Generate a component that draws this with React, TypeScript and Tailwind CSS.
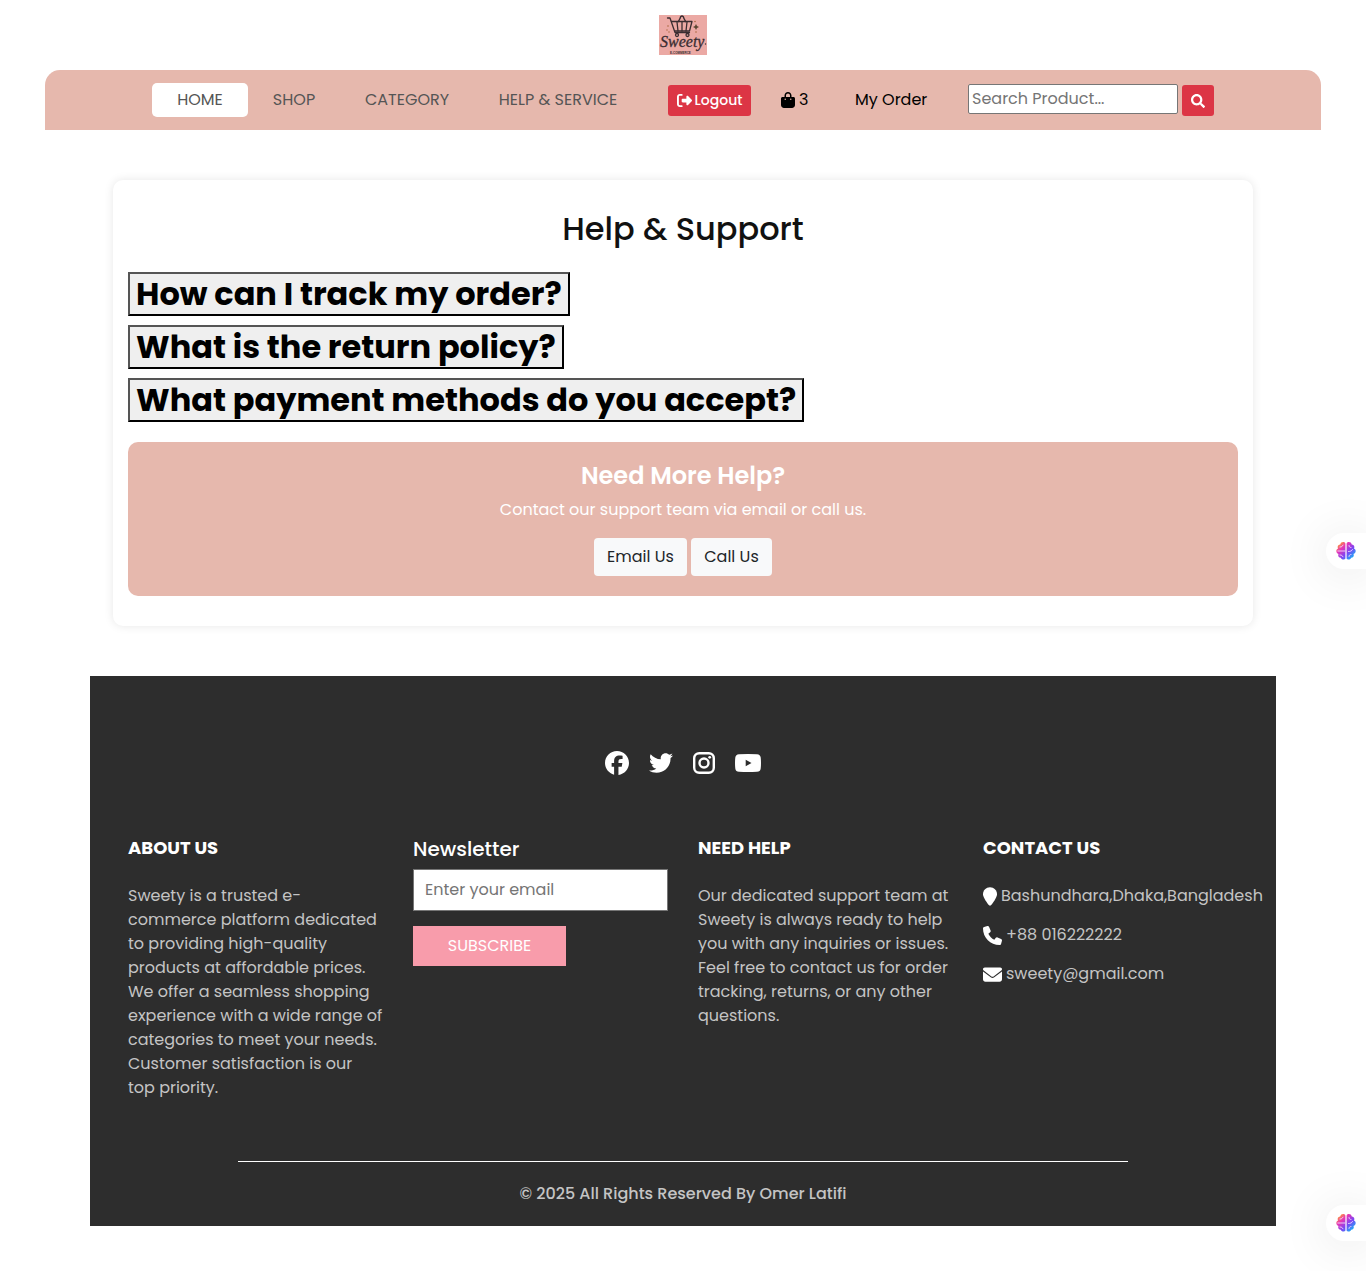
import React from 'react';
import { FaBagShopping, FaEnvelope, FaFacebook, FaLocationPin, FaPhone, FaRightFromBracket, FaTwitter } from 'react-icons/fa6';
import { FaSearch } from 'react-icons/fa';

function Logo() {
  return (
    <svg viewBox="0 0 48 40" className="h-10 w-12" role="img" aria-label="Sweety E-Commerce">
      <rect width="48" height="40" fill="#eba9a4" />
      <g fill="none" stroke="#3a2d31" strokeWidth="1.3" strokeLinecap="round" strokeLinejoin="round">
        <path d="M8.500 3h2.500l5 14.500h14.500" />
        <path d="M12.500 6.500h20.500l-2.500 9.500h-14.500" />
        <path d="M18 7l1 9M23 7v9M28 7l-1 9" />
        <path d="M19.500 6.500c.5-2 1.500-2 2-4.500q1.500-2 3 0c.5 2.500 1.500 2.500 2 4.500" />
        <circle cx="18" cy="20" r="1.500" />
        <circle cx="28.500" cy="20" r="1.500" />
      </g>
      <path d="M37 9l1 2 2 1-2 1-1 2-1-2-2-1 2-1z" fill="#5a4632" />
      <g fill="#a8683f">
        <circle cx="9" cy="11" r=".8" />
        <circle cx="8" cy="15" r=".7" />
        <circle cx="10" cy="17" r=".7" />
        <circle cx="36" cy="6.500" r=".8" />
        <circle cx="37" cy="17" r=".8" />
      </g>
      <text x="1" y="32" fontFamily="Liberation Serif, serif" fontStyle="italic" fontSize="16" fill="#3a2d31" stroke="#3a2d31" strokeWidth=".3">Sweety</text>
      <text x="11" y="39" fontFamily="Liberation Sans, sans-serif" fontWeight="700" fontSize="3" fill="#3a2d31">E-COMMERCE</text>
      <circle cx="46.500" cy="29" r=".7" fill="#3a2d31" />
    </svg>
  );
}

function InstagramIcon() {
  return (
    <svg viewBox="0 0 22 22" className="size-[22px]" fill="none" stroke="currentColor" aria-hidden="true">
      <rect x="1.200" y="1.200" width="19.600" height="19.600" rx="5" strokeWidth="2.400" />
      <circle cx="11" cy="11" r="4.500" strokeWidth="2.400" />
      <circle cx="16.700" cy="5.300" r="1.400" fill="currentColor" stroke="none" />
    </svg>
  );
}

function YoutubeIcon() {
  return (
    <svg viewBox="0 0 26 18" className="h-[18px] w-[26px]" fill="currentColor" fillRule="evenodd" aria-hidden="true">
      <path d="M4 .2Q13-.2 22 .2q3.300.3 3.700 3.400.6 5.400 0 10.800-.4 3.100-3.700 3.400-9 .4-18 0Q.7 17.500.3 14.400q-.6-5.400 0-10.800Q.7.500 4 .2zM10.700 5.800v6.400l5.800-3.200z" />
    </svg>
  );
}

function Brain({ id }: { id: string }) {
  return (
    <svg viewBox="0 0 20 20" className="size-5" aria-hidden="true">
      <defs>
        <linearGradient id={id} x1="0" y1="0" x2="1" y2="1">
          <stop offset=".1" stopColor="#ff9a2e" />
          <stop offset=".32" stopColor="#e935b5" />
          <stop offset=".6" stopColor="#7a45f5" />
          <stop offset=".9" stopColor="#12b9f5" />
        </linearGradient>
      </defs>
      <path
        fill={`url(#${id})`}
        d="M9.400 2.500v15c-.8 1.500-4 1.500-4.600-.7-2 .1-3.200-2-2.300-3.800C-.3 12-.3 8.500 2 7.500 1 5.300 2.300 3.500 4.200 3.500 4.800.5 8.500.3 9.400 2.500zM10.600 2.500c.9-2.200 4.600-2 5.200 1 1.900 0 3.200 1.800 2.200 4 2.300 1 2.300 4.500-.5 5.500.9 1.800-.3 3.900-2.300 3.800-.6 2.200-3.800 2.200-4.600.7z"
      />
      <path
        d="M4 6c1.500 0 2.500-.6 3-1.800M1.800 10h7M4 14c1.500 0 2.500.6 3 1.800M13 4.500c0 1.500 1 2 2 2M12.500 10.500c2 0 3.500-.6 4-2M13 15.500c0-1.500 1-2 2-2"
        fill="none"
        stroke="#f0d8ff"
        strokeWidth=".9"
        strokeLinecap="round"
      />
    </svg>
  );
}

const questions = [
  'How can I track my order?',
  'What is the return policy?',
  'What payment methods do you accept?',
];

export default function App() {
  return (
    <div className="relative overflow-x-hidden bg-white pb-[45px] font-[Poppins,Inter,sans-serif] text-base leading-6 text-[#212529]">
      <header className="px-[45px] pt-[15px]">
        <a href="#home" className="mx-auto mb-[15px] block w-12"><Logo /></a>
        <nav className="flex h-[60px] items-center justify-center rounded-t-[15px] bg-[#e6b8ad] text-[#555]">
          <a href="#home" className="w-24 rounded-[5px] bg-white py-[5px] text-center">HOME</a>
          <a href="#shop" className="w-[92px] text-center">SHOP</a>
          <a href="#category" className="w-[134px] text-center">CATEGORY</a>
          <a href="#help" className="w-[168px] text-center">HELP &amp; SERVICE</a>
          <button className="ml-[26px] flex h-[31px] w-[83px] items-center justify-center gap-[3px] rounded-[3px] bg-[#dc3545] text-sm font-medium text-white">
            <FaRightFromBracket className="size-[15px]" />Logout
          </button>
          <a href="#cart" className="ml-[30px] flex w-7 items-center gap-1 text-black">
            <FaBagShopping className="h-4 w-[14px] shrink-0" />3
          </a>
          <a href="#orders" className="ml-[46px] w-[73px] whitespace-nowrap text-black">My Order</a>
          <form className="ml-10 flex h-8 gap-1" onSubmit={(e) => e.preventDefault()}>
            <input aria-label="Search Product" placeholder="Search Product..." className="h-[30px] w-[210px] self-start rounded-[2px] border border-[#767676] bg-white px-[3px] pb-0.5 placeholder:text-[#757575]" />
            <button aria-label="Search" className="flex h-[31px] w-8 items-center justify-center self-end rounded-[3px] bg-[#dc3545] text-white"><FaSearch className="size-[14px]" /></button>
          </form>
        </nav>
      </header>

      <main className="mx-auto mt-[50px] max-w-[1140px] rounded-[10px] px-[15px] py-[30px] shadow-[0_0_10px_rgba(0,0,0,0.1)]">
        <h1 className="mb-6 text-center text-[32px] leading-[38px] font-medium text-[#111]">Help &amp; Support</h1>
        <div className="flex flex-col items-start gap-[9px]">
          {questions.map((q) => (
            <button key={q} className="border-2 border-t-[#555] border-r-black border-b-black border-l-[#555] bg-[#efefef] px-1.5 text-left text-[32px] leading-10 font-bold text-black">{q}</button>
          ))}
        </div>
        <section className="mt-5 flex flex-col items-center rounded-[10px] bg-[#e6b8ad] p-5 text-white">
          <h2 className="mb-2 text-2xl leading-7 font-semibold">Need More Help?</h2>
          <p className="mb-4">Contact our support team via email or call us.</p>
          <div className="flex gap-1 text-[#212529]">
            <a href="mailto:sweety@gmail.com" className="w-[93px] rounded-[4px] bg-[#f8f9fa] py-[7px] text-center">Email Us</a>
            <a href="tel:+88016222222" className="w-[81px] rounded-[4px] bg-[#f8f9fa] py-[7px] text-center">Call Us</a>
          </div>
        </section>
      </main>

      <footer className="mx-[90px] mt-[50px] bg-[#2d2d2d] pt-[75px] pb-5 text-[#c4c4c4]">
        <div className="flex h-6 items-center justify-center gap-5 text-2xl text-white">
          <a href="#facebook" aria-label="Facebook"><FaFacebook /></a>
          <a href="#twitter" aria-label="Twitter"><FaTwitter /></a>
          <a href="#instagram" aria-label="Instagram"><InstagramIcon /></a>
          <a href="#youtube" aria-label="YouTube"><YoutubeIcon /></a>
        </div>
        <div className="mx-auto mt-[61px] grid max-w-[1140px] grid-cols-4">
          <section className="px-[15px]">
            <h3 className="mb-6 text-[18px] leading-6 font-bold text-white">ABOUT US</h3>
            <p>Sweety is a trusted e-commerce platform dedicated to providing high-quality products at affordable prices. We offer a seamless shopping experience with a wide range of categories to meet your needs. Customer satisfaction is our top priority.</p>
          </section>
          <section className="px-[15px]">
            <h3 className="mb-[7px] text-xl leading-[26px] font-medium text-white">Newsletter</h3>
            <form onSubmit={(e) => e.preventDefault()}>
              <input type="email" aria-label="Email" placeholder="Enter your email" className="mb-[15px] block h-[42px] w-full border border-[#767676] bg-white px-[11px] pb-0.5 placeholder:text-[#757575]" />
              <button className="h-10 w-[153px] bg-[#f89cab] text-white">SUBSCRIBE</button>
            </form>
          </section>
          <section className="px-[15px]">
            <h3 className="mb-6 text-[18px] leading-6 font-bold text-white">NEED HELP</h3>
            <p>Our dedicated support team at Sweety is always ready to help you with any inquiries or issues. Feel free to contact us for order tracking, returns, or any other questions.</p>
          </section>
          <section className="px-[15px]">
            <h3 className="mb-6 text-[18px] leading-6 font-bold text-white">CONTACT US</h3>
            <address className="flex flex-col gap-[15px] whitespace-nowrap not-italic">
              <a href="#map" className="flex items-center gap-1"><FaLocationPin className="h-[19px] w-[14px] shrink-0 text-white" />Bashundhara,Dhaka,Bangladesh</a>
              <a href="tel:+88016222222" className="flex items-center gap-1"><FaPhone className="size-[19px] shrink-0 text-white" />+88 016222222</a>
              <a href="mailto:sweety@gmail.com" className="flex items-center gap-1"><FaEnvelope className="size-[19px] shrink-0 text-white" />sweety@gmail.com</a>
            </address>
          </section>
        </div>
        <p className="mx-auto mt-[61px] w-3/4 border-t border-white pt-5 text-center font-medium">© 2025 All Rights Reserved By Omer Latifi</p>
      </footer>

      <button aria-label="Assistant" className="absolute top-[533px] right-0 flex h-9 w-10 items-center rounded-l-full bg-white pl-2.5 shadow-[0_4px_50px_rgba(0,0,0,0.12)]"><Brain id="brain-a" /></button>
      <button aria-label="Open assistant" className="absolute right-0 bottom-[30px] flex h-9 w-10 items-center rounded-l-full bg-white pl-2.5 shadow-[0_4px_50px_rgba(0,0,0,0.12)]"><Brain id="brain-b" /></button>
    </div>
  );
}
